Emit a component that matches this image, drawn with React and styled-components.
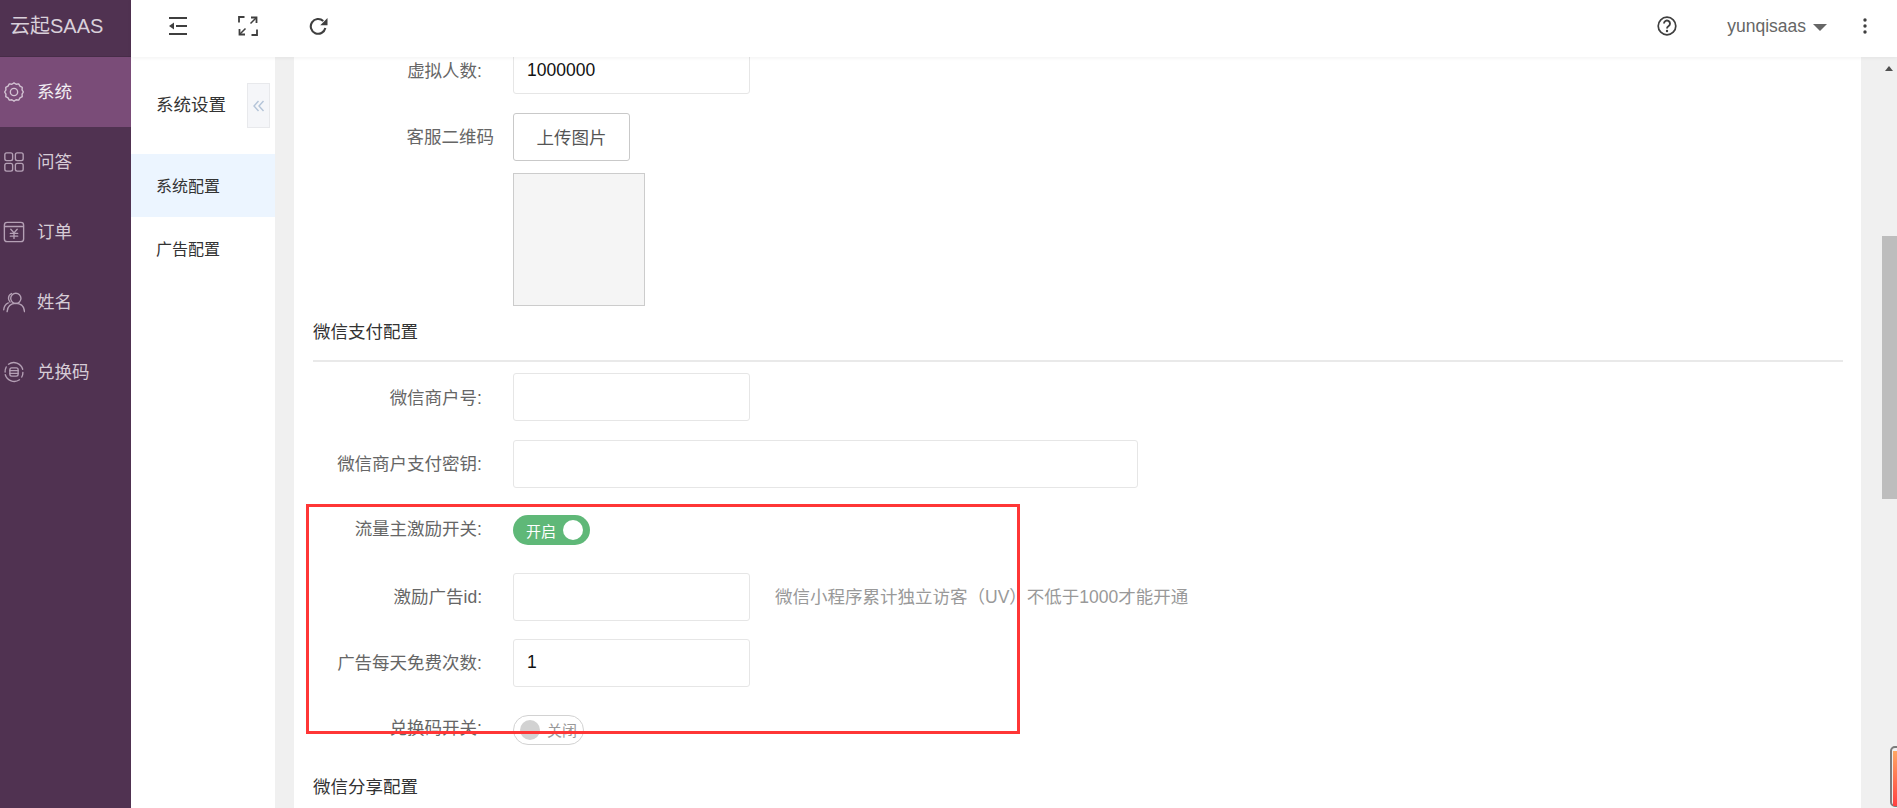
import React from "react";
import styled, { createGlobalStyle } from "styled-components";

const Global = createGlobalStyle`
  html, body { margin: 0; padding: 0; height: 100%; overflow: hidden; }
  body { font-family: "Liberation Sans", "Noto Sans CJK SC", sans-serif; font-size: 17.5px; color: #666; }
  * { box-sizing: border-box; }
`;

const Page = styled.div`display: flex; width: 100%; height: 808px; overflow: hidden; position: relative;`;

const Sidebar = styled.aside`width: 131px; flex: none; background: #503251; display: flex; flex-direction: column;`;
const Logo = styled.div`
  height: 57px; padding: 0 0 7px 10px; display: flex; align-items: center; font-size: 20px; color: #d9d0da;
  border-bottom: 1px solid #472c48;
`;
const NavItem = styled.div`
  height: 70px; display: flex; align-items: center; gap: 12px; padding: 0 0 3px 3px;
  background: ${p => (p.$active ? "#7a4c78" : "transparent")};
  color: ${p => (p.$active ? "#f2eef3" : "#d6ccd6")};
  svg { width: 22px; height: 22px; flex: none; margin-top: 3px; color: ${p => (p.$active ? "#d3c3d3" : "#b4a0b5")}; }
`;

const Right = styled.div`flex: 1; min-width: 0; display: flex; flex-direction: column;`;
const Header = styled.header`
  height: 57px; flex: none; background: #fff; display: flex; align-items: center; padding: 0 0 5px 12px;
  box-shadow: 0 1px 4px rgba(0,0,0,.06); position: relative; z-index: 2; color: #3f3f3f;
`;
const ToolButton = styled.div`width: 70px; display: flex; justify-content: center; align-items: center; svg { display: block; }`;
const Spacer = styled.div`flex: 1;`;
const HelpIcon = styled.div`display: flex; margin-right: 50px;`;
const User = styled.div`display: flex; align-items: center; color: #666; gap: 7px;`;
const Caret = styled.span`width: 0; height: 0; border-left: 7px solid transparent; border-right: 7px solid transparent; border-top: 7px solid #666; margin-top: 2px;`;
const Dots = styled.div`display: flex; margin: 0 30px 0 36px;`;

const Body = styled.div`flex: 1; min-height: 0; display: flex;`;
const SecNav = styled.nav`width: 144px; flex: none; background: #fff;`;
const SecHead = styled.div`height: 97px; display: flex; align-items: center; justify-content: space-between; padding: 0 5px 0 25px; color: #333; line-height: 1; & > span { margin-top: 1px; }`;
const Collapse = styled.div`
  width: 23px; height: 45px; background: #f5f6f9; border: 1px solid #e8e9ec; display: flex; align-items: center; justify-content: center; color: #b4c4d8;
`;
const SecItem = styled.div`
  height: 63px; padding: 0 0 2px 25px; display: flex; align-items: center; font-size: 16px; color: #333;
  background: ${p => (p.$active ? "#ecf5ff" : "#fff")};
`;

const Gutter = styled.div`flex: 1; min-width: 0; display: flex; background: #f0f0f0; padding-left: 19px;`;
const Card = styled.main`width: 1567px; flex: none; background: #fff; padding: 0 18px 0 19px; overflow: hidden; position: relative;`;
const Form = styled.div`margin-top: -11px;`;
const Row = styled.div`display: flex; align-items: center; min-height: 48px; margin-bottom: ${p => p.$gap ?? 18.5}px;`;
const Label = styled.label`
  width: 181px; flex: none; margin-right: 19px; text-align: right; white-space: nowrap; color: #666;
  padding-right: ${p => (p.$bare ? 0 : 12)}px;
  padding-bottom: ${p => (p.$high ? 6 : 2)}px;
`;
const TextInput = styled.input`
  width: ${p => (p.$wide ? 625 : 237)}px; height: 48px; border: 1px solid #e6e6e6; border-radius: 3px; padding: 0 13px;
  font: inherit; color: #111; background: #fff; outline: none;
`;
const UploadButton = styled.button`
  width: 117px; height: 48px; background: #fff; border: 1px solid #c9c9c9; border-radius: 3px; font: inherit; color: #555; padding: 0;
`;
const PreviewRow = styled.div`padding-left: 200px; margin-top: -6px;`;
const Preview = styled.div`width: 132px; height: 133px; background: #f5f5f5; border: 1px solid #ccc;`;
const SectionTitle = styled.div`
  color: #333; line-height: 24px; margin-top: ${p => p.$top}px; padding-bottom: 16px;
  ${p => p.$line && "border-bottom: 2px solid #e9e9e9; margin-bottom: 11px;"}
`;
const Hint = styled.span`margin-left: 25px; color: #999; white-space: nowrap; padding-bottom: 2px;`;
const Switch = styled.div`
  height: 30px; width: ${p => (p.$on ? 77 : 71)}px; border-radius: 15px; display: flex; align-items: center; flex: none; white-space: nowrap;
  flex-direction: ${p => (p.$on ? "row" : "row-reverse")}; justify-content: flex-end;
  gap: 7px; padding: ${p => (p.$on ? "0 7px 0 13px" : "0 0 0 6px")};
  background: ${p => (p.$on ? "#5fb878" : "#fff")}; border: ${p => (p.$on ? "0" : "1px solid #d2d2d2")};
  color: ${p => (p.$on ? "#fff" : "#999")}; font-size: 15px;
`;
const Knob = styled.span`width: 20px; height: 20px; border-radius: 50%; flex: none; background: ${p => (p.$on ? "#fff" : "#d2d2d2")};`;
const RedBox = styled.div`position: absolute; left: 12px; top: 447px; width: 714px; height: 230px; border: 3px solid #ff3636; pointer-events: none;`;

const ScrollTrack = styled.div`width: 36px; flex: none; background: #f0f0f0; padding-left: 21px; display: flex; flex-direction: column;`;
const Arrow = styled.span`width: 0; height: 0; align-self: flex-start; margin: 9px 0 0 3px; border-left: 4.5px solid transparent; border-right: 4.5px solid transparent; border-bottom: 5px solid #505050;`;
const Thumb = styled.div`height: 263px; margin-top: 165px; background: #bdbdbd;`;

const Widget = styled.div`
  position: absolute; left: 1890px; top: 746px; width: 30px; height: 61px; border: 2px solid #7b7b7b; border-radius: 5px; padding-top: 2px; background: #f0f0f0;
`;
const WidgetFill = styled.div`height: 100%; margin-top: 1px; background: linear-gradient(#ffa763, #ff4141); margin-left: 1px;`;

const I = ({ children, s = 24, v = "0 0 24 24", w = 1.5 }) => (
  <svg width={s} height={s} viewBox={v} fill="none" stroke="currentColor" strokeWidth={w} strokeLinecap="round" strokeLinejoin="round">{children}</svg>
);

const Gear = () => (
  <I><path d="M12 2l2.300 1.500 2.800-.3 1.400 2.400 2.500 1.300-.2 2.800L22.200 12l-1.400 2.300.2 2.800-2.500 1.300-1.400 2.400-2.800-.3L12 22l-2.300-1.500-2.800.3-1.400-2.400-2.500-1.300.2-2.800L1.800 12l1.400-2.300-.2-2.800 2.500-1.300 1.400-2.400 2.800.3z" /><circle cx="12" cy="12" r="4" /></I>
);
const Grid = () => (
  <I><rect x="2" y="2" width="8.500" height="8.500" rx="2" /><rect x="13.500" y="2" width="8.500" height="8.500" rx="2" /><rect x="2" y="13.500" width="8.500" height="8.500" rx="2" /><rect x="13.500" y="13.500" width="8.500" height="8.500" rx="2" /></I>
);
const YenBox = () => (
  <I><rect x="1.500" y="1.500" width="21" height="21" rx="3" /><path d="M2 6h20M8.500 9l3.500 4 3.500-4M12 13v6M8 13.500h8M8 16.500h8" /></I>
);
const People = () => (
  <I><circle cx="14" cy="8" r="5.600" /><path d="M4.500 22.500c.5-5.800 4.300-9 9.500-9s9 3.200 9.500 9" /><path d="M9.300 2.800A5.500 5.500 0 0 0 6 8c0 1.500.6 2.900 1.700 4" /><path d="M.8 20.500c.2-3.500 2-6.200 5-7.500" /></I>
);
const CodeIcon = () => (
  <I><path d="M21.500 9A10.200 10.200 0 0 0 6 3.500" /><path d="M2.500 15A10.200 10.200 0 0 0 18 20.500" /><path d="M3.500 6.500A10.200 10.200 0 0 0 2.300 12" /><path d="M20.500 17.500a10.200 10.200 0 0 0 1.200-5" /><rect x="7.500" y="7.500" width="9" height="9" rx="2" /><path d="M7.500 10.500h9M7.500 13.500h9" /></I>
);
const Outdent = () => (
  <svg width="20" height="18" viewBox="0 0 20 18" fill="currentColor"><rect x="1" y="0" width="18" height="2" /><rect x="8" y="8" width="11" height="2" /><rect x="1" y="16" width="18" height="2" /><path d="M1 9l5-3.500v7z" /></svg>
);
const Fullscreen = () => (
  <svg width="20" height="20" viewBox="0 0 20 20" fill="none" stroke="currentColor" strokeWidth="1.800"><path d="M1 6.500V1h5.500M13 1.500h5.500V7M19 13.500V19h-5.500M7 18.500H1.500V13" /><path d="M12.500 7.500L18 2M7.500 12.500L2 18" strokeWidth="1.500" /></svg>
);
const Refresh = () => (
  <svg width="19" height="19" viewBox="0 0 18 18" fill="none"><path d="M15.500 10.500A7 7 0 1 1 13.500 3.800" stroke="currentColor" strokeWidth="2" /><path d="M17.500 1v6.800h-6.800z" fill="currentColor" /></svg>
);
const Help = () => (
  <svg width="20" height="20" viewBox="0 0 20 20" fill="none" stroke="currentColor"><circle cx="10" cy="10" r="8.800" strokeWidth="1.700" /><path d="M7 7.600a3 3 0 1 1 4.700 2.400c-1.200.8-1.700 1.300-1.700 2.500" strokeWidth="1.900" /><circle cx="10" cy="15" r="1.200" fill="currentColor" stroke="none" /></svg>
);
const More = () => (
  <svg width="4" height="16" viewBox="0 0 4 16" fill="currentColor"><circle cx="2" cy="2" r="1.700" /><circle cx="2" cy="8" r="1.700" /><circle cx="2" cy="14" r="1.700" /></svg>
);
const Chevrons = () => (
  <svg width="12" height="12" viewBox="0 0 12 12" fill="none" stroke="currentColor" strokeWidth="1.400"><path d="M5.500 1L1 6l4.500 5M10.500 1L6 6l4.500 5" /></svg>
);

const nav = [
  { name: "系统", icon: <Gear />, active: true },
  { name: "问答", icon: <Grid /> },
  { name: "订单", icon: <YenBox /> },
  { name: "姓名", icon: <People /> },
  { name: "兑换码", icon: <CodeIcon /> },
];

export default function App() {
  return (
    <>
      <Global />
      <Page>
        <Sidebar>
          <Logo>云起SAAS</Logo>
          {nav.map(n => (
            <NavItem key={n.name} $active={n.active}>{n.icon}<span>{n.name}</span></NavItem>
          ))}
        </Sidebar>
        <Right>
          <Header>
            <ToolButton><Outdent /></ToolButton>
            <ToolButton><Fullscreen /></ToolButton>
            <ToolButton><Refresh /></ToolButton>
            <Spacer />
            <HelpIcon><Help /></HelpIcon>
            <User>yunqisaas<Caret /></User>
            <Dots><More /></Dots>
          </Header>
          <Body>
            <SecNav>
              <SecHead><span>系统设置</span><Collapse><Chevrons /></Collapse></SecHead>
              <SecItem $active>系统配置</SecItem>
              <SecItem>广告配置</SecItem>
            </SecNav>
            <Gutter>
              <Card>
                <Form>
                  <Row><Label>虚拟人数:</Label><TextInput readOnly value="1000000" /></Row>
                  <Row><Label $bare>客服二维码</Label><UploadButton>上传图片</UploadButton></Row>
                  <PreviewRow><Preview /></PreviewRow>
                  <SectionTitle $top={14} $line>微信支付配置</SectionTitle>
                  <Row><Label>微信商户号:</Label><TextInput readOnly value="" /></Row>
                  <Row><Label>微信商户支付密钥:</Label><TextInput $wide readOnly value="" /></Row>
                  <Row><Label $high>流量主激励开关:</Label><Switch $on>开启<Knob $on /></Switch></Row>
                  <Row $gap={18}><Label>激励广告id:</Label><TextInput readOnly value="" /><Hint>微信小程序累计独立访客（UV）不低于1000才能开通</Hint></Row>
                  <Row $gap={19}><Label>广告每天免费次数:</Label><TextInput readOnly value="1" /></Row>
                  <Row $gap={0}><Label $high>兑换码开关:</Label><Switch>关闭<Knob /></Switch></Row>
                  <SectionTitle $top={21}>微信分享配置</SectionTitle>
                </Form>
                <RedBox />
              </Card>
              <ScrollTrack>
                <Arrow />
                <Thumb />
              </ScrollTrack>
            </Gutter>
          </Body>
        </Right>
        <Widget><WidgetFill /></Widget>
      </Page>
    </>
  );
}
